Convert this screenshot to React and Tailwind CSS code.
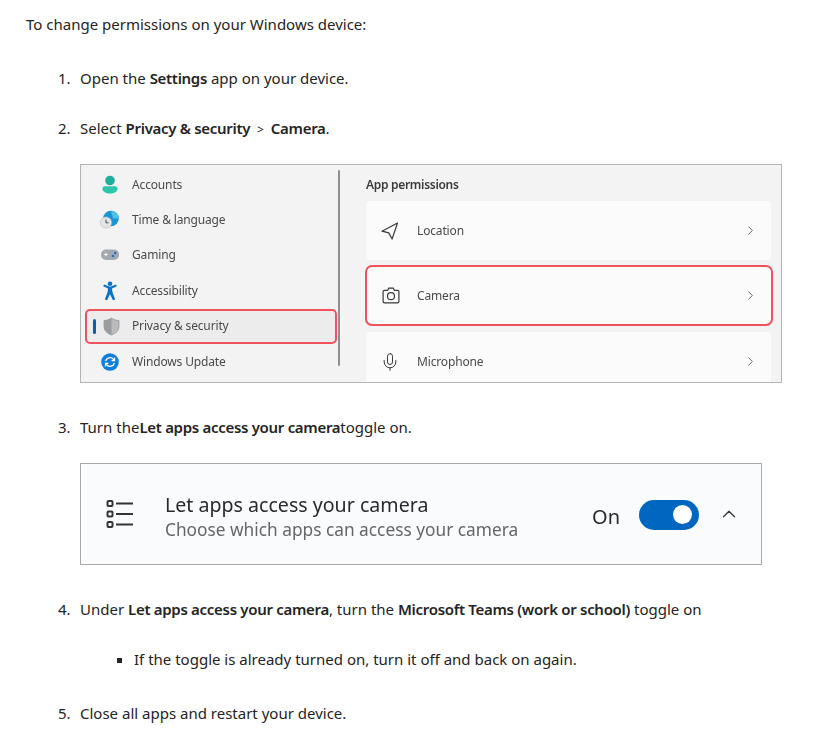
import React from 'react';
import { ChevronRight, ChevronUp, Mic } from 'lucide-react';

const AccountsIcon = () => (
  <svg width="18" height="20" viewBox="0 0 18 20">
    <circle cx="9" cy="5.5" r="4.8" fill="#1fae9a" />
    <path d="M1.5 13.5c0-1.4 1-2.2 2.4-2.2h10.2c1.4 0 2.4.8 2.4 2.2 0 3.4-3.4 5-7.5 5s-7.5-1.6-7.5-5z" fill="#2fc4ac" />
  </svg>
);

const TimeIcon = () => (
  <svg width="20" height="20" viewBox="0 0 20 20">
    <circle cx="11" cy="8.5" r="7.8" fill="#1b93d8" />
    <path d="M11 .7a7.8 7.8 0 0 1 7.8 7.8H13z" fill="#4fc0e8" />
    <circle cx="6" cy="12.5" r="5.6" fill="#e4e4e4" stroke="#b8b8b8" strokeWidth="0.6" />
    <path d="M6 9.6v3.2h2.4" fill="none" stroke="#444" strokeWidth="1" />
  </svg>
);

const GamingIcon = () => (
  <svg width="20" height="14" viewBox="0 0 20 14">
    <rect x="1" y="1.5" width="18" height="10.5" rx="5" fill="#a4a9b0" />
    <path d="M4.2 6.5h3.4M5.9 4.8v3.4" stroke="#fff" strokeWidth="1" />
    <circle cx="13" cy="8" r="1.3" fill="#1f74c8" />
    <circle cx="15.2" cy="5" r="1.3" fill="#1f74c8" />
  </svg>
);

const AccessibilityIcon = () => (
  <svg width="16" height="20" viewBox="0 0 16 20">
    <circle cx="8" cy="2.8" r="2.3" fill="#0a72c9" />
    <path d="M1.2 5.2 L6 7.4 L5.6 11 L2.8 18.6 L5 19.2 L8 13.2 L11 19.2 L13.2 18.6 L10.4 11 L10 7.4 L14.8 5.2 L14 3.6 L8 5.8 L2 3.6z" fill="#0a72c9" />
  </svg>
);

const ShieldIcon = () => (
  <svg width="17" height="19" viewBox="0 0 17 19">
    <path d="M8.5 1C6.4 2.7 4 3.4 1 3.5v6c0 4 3 6.8 7.5 8.5 4.5-1.7 7.5-4.5 7.5-8.5v-6c-3-.1-5.4-.8-7.5-2.5z" fill="#b9bbbd" stroke="#8d8f92" strokeWidth="0.7" />
    <path d="M8.5 1C6.4 2.7 4 3.4 1 3.5v6c0 4 3 6.8 7.5 8.5z" fill="#9a9da0" />
  </svg>
);

const UpdateIcon = () => (
  <svg width="18" height="18" viewBox="0 0 18 18">
    <circle cx="9" cy="9" r="8.8" fill="#0f7fdc" />
    <path d="M4.6 8.2a4.5 4.5 0 0 1 7.8-2l1 1M13.4 9.8a4.5 4.5 0 0 1-7.8 2l-1-1" fill="none" stroke="#fff" strokeWidth="1.3" />
    <path d="M13.6 4.6v3h-3M4.4 13.4v-3h3" fill="none" stroke="#fff" strokeWidth="1.1" />
  </svg>
);

const LocationIcon = () => (
  <svg width="18" height="18" viewBox="0 0 18 18" fill="none" stroke="#3a3a3a" strokeWidth="1.2" strokeLinejoin="round">
    <path d="M16.5 1 1 9.2l6.8 1.7 3.3 6.1z" />
  </svg>
);

const CameraIcon = () => (
  <svg width="18" height="17" viewBox="0 0 18 17" fill="none" stroke="#3a3a3a" strokeWidth="1.2">
    <path d="M5.6 3.4 6.7 1.2h4.6l1.1 2.2h3.1c.8 0 1.4.6 1.4 1.4v9.6c0 .8-.6 1.4-1.4 1.4H2.5c-.8 0-1.4-.6-1.4-1.4V4.8c0-.8.6-1.4 1.4-1.4z" />
    <circle cx="9" cy="9.2" r="3.5" />
  </svg>
);

const ListIcon = () => (
  <svg width="28" height="30" viewBox="0 0 28 30" fill="none" stroke="#333" strokeWidth="2">
    <rect x="1.5" y="2" width="5" height="5" rx="1" />
    <rect x="1.5" y="12.5" width="5" height="5" rx="1" />
    <rect x="1.5" y="23" width="5" height="5" rx="1" />
    <path d="M10 4.5h17M10 15h17M10 25.5h17" />
  </svg>
);

const settingsItems = [
  { label: 'Accounts', icon: <AccountsIcon /> },
  { label: 'Time & language', icon: <TimeIcon /> },
  { label: 'Gaming', icon: <GamingIcon /> },
  { label: 'Accessibility', icon: <AccessibilityIcon /> },
  { label: 'Privacy & security', icon: <ShieldIcon />, active: true },
  { label: 'Windows Update', icon: <UpdateIcon /> },
];

const PermissionRow = ({ label, icon, active }) => (
  <div
    className={
      active
        ? 'mb-[6px] -ml-[1px] flex h-[61px] w-[408px] items-center rounded-[7px] border-2 border-[#f0525c] bg-[#fbfbfb]'
        : 'mb-[5px] flex h-[59px] w-[405px] shrink-0 items-center rounded-[4px] bg-[#fbfbfb]'
    }
  >
    <div className={active ? 'flex w-[50px] justify-center pr-[3px]' : 'flex w-[51px] justify-center pr-[3px]'}>{icon}</div>
    <span className="pt-[1px]">{label}</span>
    <ChevronRight size={15} strokeWidth={1.4} color="#555" className="mr-[13px] ml-auto" />
  </div>
);

const SettingsShot = () => (
  <div className="mt-6 mb-8 flex h-[219px] w-[702px] overflow-hidden border border-[#b4b4b4] bg-[#f3f3f3] text-[12px] tracking-[-0.15px] text-[#4a4a4a] blur-[0.3px]">
    {/* Left nav */}
    <div className="w-[257px] shrink-0 pt-[2px] pl-[4px]">
      {settingsItems.map((item) => (
        <div
          key={item.label}
          className={
            item.active
              ? 'relative flex h-[35.4px] w-[252px] items-center rounded-[5px] border-2 border-[#f0525c] bg-[#ececec]'
              : 'flex h-[35.4px] items-center'
          }
        >
          {item.active && <div className="absolute left-[6px] h-[15px] w-[3px] rounded bg-[#0a5fb4]" />}
          <div className={item.active ? 'flex w-[45px] justify-center pl-[3px]' : 'flex w-[46px] justify-center pl-[4px]'}>
            {item.icon}
          </div>
          <span className={item.active ? '' : 'pl-[1px]'}>{item.label}</span>
        </div>
      ))}
    </div>
    {/* Scrollbar */}
    <div className="mt-[5px] h-[196px] w-[2px] shrink-0 rounded bg-[#8f8f8f]" />
    {/* Right pane */}
    <div className="ml-[26px] w-[405px]">
      <div className="h-[36px] pt-[11px] text-[12px] leading-[18px] font-semibold tracking-[-0.3px] text-[#3a3a3a]">App permissions</div>
      <PermissionRow label="Location" icon={<LocationIcon />} />
      <PermissionRow label="Camera" icon={<CameraIcon />} active />
      <PermissionRow label="Microphone" icon={<Mic size={20} strokeWidth={1.2} color="#3a3a3a" />} />
    </div>
  </div>
);

const ToggleShot = () => (
  <div className="mt-6 mb-8 flex h-[102px] w-[682px] items-center border border-[#a8a8a8] bg-[#f9fbfd] blur-[0.3px]">
    <div className="ml-[25px] w-[59px] shrink-0"><ListIcon /></div>
    <div className="flex-1 pt-[6px]">
      <div className="text-[19.6px] leading-[24px] text-[#2a2a2a]">Let apps access your camera</div>
      <div className="text-[17.3px] leading-[25px] text-[#666]">Choose which apps can access your camera</div>
    </div>
    <span className="mr-[19px] pt-[5px] text-[20px] text-[#2a2a2a]">On</span>
    <div className="mt-[1px] flex h-[30px] w-[60px] items-center justify-end rounded-full bg-[#0067c0] pr-[7px]">
      <div className="h-[19px] w-[19px] rounded-full bg-white" />
    </div>
    <ChevronUp size={22} strokeWidth={1.4} color="#333" className="mr-[21px] ml-[19px]" />
  </div>
);

const Bold = ({ children }) => <b className="font-semibold tracking-[-0.3px]">{children}</b>;

const Step = ({ n, className, children }) => (
  <li className={`flex ${className || ''}`}>
    <span className="w-[22px] shrink-0">{n}.</span>
    <div>{children}</div>
  </li>
);

const App = () => {
  return (
    <div className="min-h-[752px] bg-white pt-3 pl-[26px] font-['Noto_Sans',sans-serif] text-[15px] leading-6 text-[#242424]">
      <p>To change permissions on your Windows device:</p>
      <ol className="mt-[30px] pl-[32px]">
        <Step n={1} className="mb-[26px]">Open the <Bold>Settings</Bold> app on your device.</Step>
        <Step n={2}>
          Select <Bold>Privacy &amp; security</Bold> <span className="mx-[3px] text-[12px] leading-none">&gt;</span> <Bold>Camera</Bold>.
          <SettingsShot />
        </Step>
        <Step n={3}>
          <div>Turn the<Bold>Let apps access your camera</Bold>toggle on.</div>
          <ToggleShot />
        </Step>
        <Step n={4} className="mb-[30px]">
          Under <Bold>Let apps access your camera</Bold>, turn the <Bold>Microsoft Teams (work or school)</Bold> toggle on
          <ul className="mt-[26px] list-[square] pl-[54px]">
            <li>If the toggle is already turned on, turn it off and back on again.</li>
          </ul>
        </Step>
        <Step n={5}>Close all apps and restart your device.</Step>
      </ol>
    </div>
  );
};

export default App;
